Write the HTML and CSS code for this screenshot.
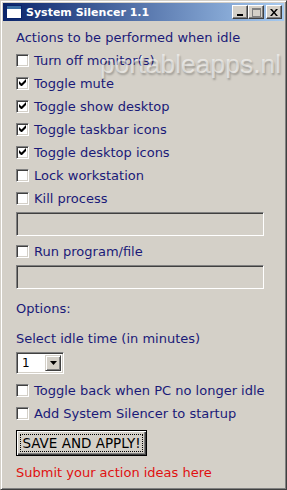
FILE: index.html
```html
<!DOCTYPE html>
<html>
    <head>
        <meta charset="UTF-8">
        <title>System Silencer 1.1</title>
        <link rel="stylesheet" href="styles.css">
    </head>
    <body>
        <div class="window">
            <div class="titlebar">
                <span class="app-icon"></span>
                <span class="title">System Silencer 1.1</span>
                <div class="caption-buttons">
                    <span class="cbtn">
                        <svg width="8" height="7" viewBox="0 0 8 7"><rect x="1" y="5" width="6" height="2" fill="#000"/></svg>
                    </span>
                    <span class="cbtn">
                        <svg width="9" height="9" viewBox="0 0 9 9"><rect x="0.5" y="0.5" width="8" height="8" fill="none" stroke="#808080"/><rect x="0" y="0" width="9" height="2" fill="#808080"/></svg>
                    </span>
                    <span class="cbtn close">
                        <svg width="8" height="7" viewBox="0 0 8 7"><path d="M0 0h2l2 2.5L6 0h2L5 3.5 8 7H6L4 4.5 2 7H0l3-3.5z" fill="#000"/></svg>
                    </span>
                </div>
            </div>

            <div class="content">
                <div class="watermark">portableapps.nl</div>

                <div class="heading">Actions to be performed when idle</div>

                <div class="check"><span class="box"></span>Turn off monitor(s)</div>
                <div class="check"><span class="box on"></span>Toggle mute</div>
                <div class="check"><span class="box on"></span>Toggle show desktop</div>
                <div class="check"><span class="box on"></span>Toggle taskbar icons</div>
                <div class="check"><span class="box on"></span>Toggle desktop icons</div>
                <div class="check"><span class="box"></span>Lock workstation</div>
                <div class="check"><span class="box"></span>Kill process</div>
                <div class="field"></div>
                <div class="check"><span class="box"></span>Run program/file</div>
                <div class="field"></div>

                <div class="label options">Options:</div>
                <div class="label">Select idle time (in minutes)</div>
                <div class="combo">
                    <span class="combo-value">1</span>
                    <span class="combo-arrow">
                        <svg width="7" height="4" viewBox="0 0 7 4"><path d="M0 0h7L3.5 4z" fill="#000"/></svg>
                    </span>
                </div>

                <div class="check"><span class="box"></span>Toggle back when PC no longer idle</div>
                <div class="check"><span class="box"></span>Add System Silencer to startup</div>

                <div class="button"><span>SAVE AND APPLY!</span></div>

                <div class="link">Submit your action ideas here</div>
            </div>
        </div>
    </body>
</html>
```

FILE: styles.css
```css
html, body {
    margin: 0;
    padding: 0;
    background: #d4d0c8;
}
.window {
    width: 287px;
    height: 490px;
    box-sizing: border-box;
    background: #d4d0c8;
    border: 1px solid;
    border-color: #d4d0c8 #404040 #404040 #d4d0c8;
    box-shadow: inset 1px 1px #fff, inset -1px -1px #808080;
    padding: 2px;
    position: relative;
    font-family: "DejaVu Sans", Verdana, sans-serif;
}
.titlebar {
    height: 18px;
    display: flex;
    align-items: center;
    background: linear-gradient(to right, #0a246a, #a6caf0);
    padding: 0 2px 0 2px;
}
.app-icon {
    width: 14px;
    height: 12px;
    background: #fff;
    border-top: 3px solid #3a6ea5;
    box-sizing: border-box;
    box-shadow: 0 0 0 1px #0a246a;
    margin-right: 5px;
    margin-left: 2px;
}
.title {
    color: #fff;
    font-family: "DejaVu Sans", Tahoma, sans-serif;
    font-weight: bold;
    font-size: 11px;
    flex: 1;
}
.caption-buttons {
    display: flex;
}
.cbtn {
    width: 16px;
    height: 14px;
    box-sizing: border-box;
    background: #d4d0c8;
    border: 1px solid;
    border-color: #fff #404040 #404040 #fff;
    box-shadow: inset -1px -1px #808080;
    display: flex;
    align-items: center;
    justify-content: center;
}
.cbtn.close {
    margin-left: 2px;
}
.content {
    position: relative;
    padding: 9px 13px 0 13px;
    color: #1a1a78;
    font-size: 13px;
}
.heading {
    height: 16px;
    line-height: 16px;
    margin-bottom: 3px;
}
.check {
    display: flex;
    align-items: center;
    height: 23px;
}
.box {
    width: 13px;
    height: 13px;
    box-sizing: border-box;
    background: #fff;
    border: 1px solid;
    border-color: #808080 #fff #fff #808080;
    box-shadow: inset 1px 1px #404040, inset -1px -1px #d4d0c8;
    margin-right: 5px;
    position: relative;
}
.box.on::after {
    content: "";
    position: absolute;
    left: 2px;
    top: 1px;
    width: 7px;
    height: 7px;
    background: no-repeat center / 7px 7px url("data:image/svg+xml;utf8,<svg xmlns='http://www.w3.org/2000/svg' viewBox='0 0 7 7'><path d='M0 2v3l2 2h1l4-4V0L2.5 4.5z' fill='black'/></svg>");
}
.field {
    height: 24px;
    box-sizing: border-box;
    margin: 2px 7px 4px 0;
    background: #d4d0c8;
    border: 1px solid;
    border-color: #808080 #fff #fff #808080;
    box-shadow: inset 1px 1px #404040, inset -1px -1px #d4d0c8;
}
.label {
    height: 16px;
    line-height: 16px;
}
.label.options {
    margin: 12px 0 14px 0;
}
.combo {
    margin-top: 5px;
    width: 48px;
    height: 22px;
    box-sizing: border-box;
    display: flex;
    align-items: center;
    background: #fff;
    border: 1px solid;
    border-color: #808080 #fff #fff #808080;
    box-shadow: inset 1px 1px #404040, inset -1px -1px #d4d0c8;
    padding: 2px;
    margin-bottom: 5px;
}
.combo-value {
    flex: 1;
    color: #000;
    padding-left: 3px;
    font-size: 12px;
}
.combo-arrow {
    width: 16px;
    height: 16px;
    box-sizing: border-box;
    background: #d4d0c8;
    border: 1px solid;
    border-color: #d4d0c8 #404040 #404040 #d4d0c8;
    box-shadow: inset 1px 1px #fff, inset -1px -1px #808080;
    display: flex;
    align-items: center;
    justify-content: center;
}
.button {
    margin-top: 5px;
    width: 131px;
    height: 26px;
    box-sizing: border-box;
    border: 1px solid #000;
    background: #d4d0c8;
    box-shadow: inset 1px 1px #fff, inset -1px -1px #404040, inset -2px -2px #808080;
    display: flex;
    padding: 3px;
}
.button > span {
    flex: 1;
    display: flex;
    align-items: center;
    justify-content: center;
    color: #000;
    font-size: 13.5px;
    border: 1px dotted #000;
}
.link {
    color: #e01010;
    margin-top: 9px;
    height: 16px;
    line-height: 16px;
}
.watermark {
    position: absolute;
    left: 97px;
    top: 28px;
    font-family: "Liberation Sans", Arial, sans-serif;
    font-size: 26.5px;
    color: rgba(255, 255, 255, 0.55);
    text-shadow: 1px 2px 2px rgba(0, 0, 0, 0.25);
    pointer-events: none;
}
```
